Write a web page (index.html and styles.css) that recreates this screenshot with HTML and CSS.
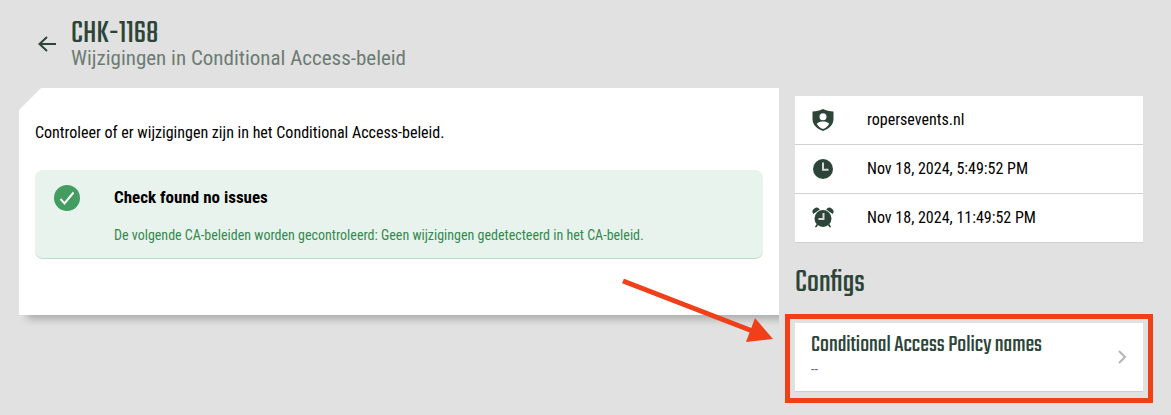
FILE: index.html
```
<!DOCTYPE html>
<html lang="nl">
<head>
  <meta charset="UTF-8">
  <meta name="viewport" content="width=device-width, initial-scale=1.0">
  <title>CHK-1168</title>
  <link rel="stylesheet" href="styles.css">
</head>
<body>
  <header class="page-header">
    <a class="back" href="#" aria-label="Terug">
      <svg width="24" height="24" viewBox="0 0 24 24"><path d="M21 12H4.500M12 5L4.500 12l7.500 7"/></svg>
    </a>
    <div>
      <h1>CHK-1168</h1>
      <p class="subtitle">Wijzigingen in Conditional Access-beleid</p>
    </div>
  </header>

  <main class="layout">
    <section class="card">
      <p class="description">Controleer of er wijzigingen zijn in het Conditional Access-beleid.</p>
      <div class="alert">
        <svg class="alert-icon" width="26" height="26" viewBox="0 0 26 26">
          <circle cx="13" cy="13" r="13"/>
          <path d="M6.500 14l4 4.500 9-11"/>
        </svg>
        <div>
          <h2 class="alert-title">Check found no issues</h2>
          <p class="alert-text">De volgende CA-beleiden worden gecontroleerd: Geen wijzigingen gedetecteerd in het CA-beleid.</p>
        </div>
      </div>
    </section>

    <aside class="sidebar">
      <ul class="info">
        <li>
          <svg width="24" height="24" viewBox="0 0 24 24"><path fill-rule="evenodd" d="M12 1C9 2.700 5.500 3.400 1.500 3.600V11c0 5.500 4.300 9.800 10.500 12 6.200-2.200 10.500-6.500 10.500-12V3.600C18.500 3.400 15 2.700 12 1zm0 4.300a3.500 3.500 0 1 1 0 7 3.500 3.500 0 0 1 0-7zM5.800 15.700c1.300-1.700 4-2.200 6.200-2.200s4.900.5 6.200 2.200c-1.300 2.500-3.500 4.300-6.200 5.300-2.700-1-4.900-2.800-6.200-5.300z"/></svg>
          <span>ropersevents.nl</span>
        </li>
        <li>
          <svg width="24" height="24" viewBox="0 0 24 24"><circle cx="12" cy="12" r="10"/><path class="hand" d="M12 5.500v7.200h5.500"/></svg>
          <span>Nov 18, 2024, 5:49:52 PM</span>
        </li>
        <li>
          <svg width="24" height="24" viewBox="0 0 24 24"><circle cx="12" cy="12.500" r="8.500"/><path d="M2.300 8a3.500 3.500 0 0 1 6.500-4.500zM21.700 8a3.500 3.500 0 0 0-6.500-4.500zM5.500 18l1.500 1.200-1.500 2H3.800zM18.500 18l-1.500 1.200 1.500 2h1.700z"/><path class="hand" d="M12.500 7v6H7.500"/></svg>
          <span>Nov 18, 2024, 11:49:52 PM</span>
        </li>
      </ul>

      <h2 class="section-title">Configs</h2>
      <div class="config-wrap">
        <a class="config" href="#">
          <div>
            <h3>Conditional Access Policy names</h3>
            <p>--</p>
          </div>
          <svg class="chevron" width="10" height="14" viewBox="0 0 10 14"><path d="M2 1l6 6-6 6"/></svg>
        </a>
        <div class="highlight"></div>
        <svg class="arrow" width="152" height="66" viewBox="0 0 152 66">
          <path class="arrow-line" d="M1 2l132 51"/>
          <path class="arrow-head" d="M133 39l18 21-27 3z"/>
        </svg>
      </div>
    </aside>
  </main>
</body>
</html>
```
FILE: styles.css
```
* {
  box-sizing: border-box;
}

body {
  min-height: 100vh;
  margin: 0;
  padding: 16px 28px 12px 19px;
  background-color: #e1e1e1;
  color: #000;
  font-family: 'Roboto Condensed', 'Liberation Sans Narrow', Roboto, sans-serif;
  font-size: 16px;
  line-height: 22px;
}

h1, h2, h3, p, ul {
  margin: 0;
  padding: 0;
}

svg {
  display: block;
  flex: none;
}

.page-header {
  display: flex;
  align-items: center;
  gap: 12px;
  height: 56px;
  padding-left: 16px;
  margin-bottom: 16px;
}

.back path {
  fill: none;
  stroke: #2d4539;
  stroke-width: 2;
}

h1, .section-title, .config h3 {
  font-family: Teko, 'Liberation Sans Narrow', 'Roboto Condensed', sans-serif;
  font-weight: 400;
  color: #2d4539;
}

h1 {
  font-size: 32px;
  line-height: 28px;
}

.subtitle {
  font-size: 21px;
  line-height: 20px;
  color: #6c7c74;
}

.layout {
  display: grid;
  grid-template-columns: minmax(0, 1fr) 348px;
  gap: 16px;
  align-items: start;
}

/* clip keeps the shadow below the card and cuts the top left corner */
.card {
  padding: 34px 16px 56px;
  background-color: #fff;
  box-shadow: 8px 4px 8px rgba(0, 0, 0, 0.25);
  clip-path: polygon(22px 0, 100% 0, 100% calc(100% + 20px), 0 calc(100% + 20px), 0 22px);
}

.alert {
  display: flex;
  gap: 34px;
  margin-top: 26px;
  padding: 15px 19px 12px;
  background-color: #e8f3ed;
  border-bottom: 1px solid #b9dec9;
  border-radius: 8px;
}

.alert-icon circle {
  fill: #449d60;
}

.alert-icon path {
  fill: none;
  stroke: #fff;
  stroke-width: 2;
}

.alert-title {
  margin-bottom: 15px;
  font-size: 17px;
  line-height: 24px;
}

.alert-text {
  font-size: 14px;
  color: #35894f;
}

.sidebar {
  padding-top: 8px;
}

.info {
  list-style: none;
  background-color: #fff;
}

.info li {
  display: flex;
  align-items: center;
  gap: 32px;
  height: 49px;
  padding: 0 16px;
  border-bottom: 1px solid #d0d0d0;
}

.info svg {
  fill: #2d4539;
}

.info .hand {
  fill: none;
  stroke: #d5dad7;
  stroke-width: 2;
}

.section-title {
  margin: 24px 0;
  font-size: 32px;
  line-height: 32px;
}

.config-wrap {
  position: relative;
}

.config {
  display: flex;
  align-items: center;
  justify-content: space-between;
  padding: 10px 16px;
  background-color: #fff;
  border-bottom: 1px solid #cfcfcf;
  text-decoration: none;
}

.config h3 {
  font-size: 24px;
  line-height: 24px;
}

.config p {
  font-size: 14px;
  line-height: 24px;
  color: #5f6b65;
}

.chevron path {
  fill: none;
  stroke: #b5b5b5;
  stroke-width: 2;
}

/* red frame and arrow lie over the page */
.highlight {
  position: absolute;
  inset: -9px -10px -11px;
  border: 5px solid #ef4019;
  pointer-events: none;
}

.arrow {
  position: absolute;
  top: -44px;
  left: -173px;
  pointer-events: none;
}

.arrow-line {
  fill: none;
  stroke: #ef4019;
  stroke-width: 5;
}

.arrow-head {
  fill: #ef4019;
}
```
